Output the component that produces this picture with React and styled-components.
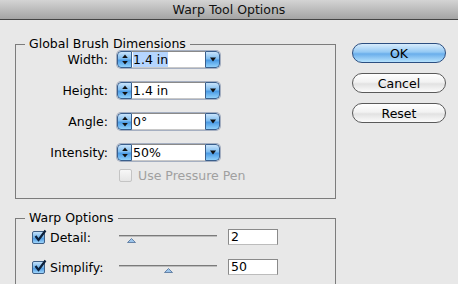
import React from 'react';
import styled, { createGlobalStyle } from 'styled-components';

const Global = createGlobalStyle`
  html, body { margin: 0; padding: 0; background: #e8e8e8; }
  body { font-family: "DejaVu Sans", "Lucida Grande", sans-serif; color: #000; }
`;

const Window = styled.div`
  width: 458px;
  height: 284px;
  overflow: hidden;
  background: #e8e8e8;
`;

const TitleBar = styled.div`
  height: 19px;
  border-bottom: 1px solid #444;
  background: linear-gradient(#d4d4d4, #a4a4a4);
  display: flex;
  align-items: center;
  justify-content: center;
  font-size: 12.5px;
  color: #111;
`;

const Body = styled.div`
  display: flex;
  padding-left: 15px;
`;

const Column = styled.div`
  display: flex;
  flex-direction: column;
  width: 321px;
`;

const Group = styled.fieldset`
  margin: ${p => p.$top}px 0 0 0;
  padding: 0 0 ${p => p.$bottom}px 0;
  border: 1px solid #7c7c7c;
  min-width: 0;
  box-sizing: border-box;
  width: 321px;
`;

const Legend = styled.legend`
  margin-left: 9px;
  padding: 0 4px 0 4px;
  font-size: 12.5px;
  line-height: 14px;
`;

const Grid = styled.div`
  display: grid;
  grid-template-columns: 92px 103px;
  column-gap: 9px;
  row-gap: 14px;
  align-items: center;
`;

const Label = styled.div`
  text-align: right;
  font-size: 12.5px;
  line-height: 17px;
`;

const Combo = styled.div`
  display: flex;
  height: 17px;
  border-radius: 4px;
  overflow: hidden;
  box-shadow: 0 0 0 1px rgba(40, 70, 120, 0.35);
`;

const AquaPart = styled.div`
  width: ${p => p.$w}px;
  background: linear-gradient(#c9e4fb 0%, #7fbdf0 45%, #4a9ae4 55%, #8fd0fb 100%);
  border: 1px solid #3a5f8c;
  border-radius: ${p => (p.$left ? '4px 0 0 4px' : '0 4px 4px 0')};
  box-sizing: border-box;
  display: flex;
  align-items: center;
  justify-content: center;
`;

const Field = styled.div`
  flex: 1;
  background: #fff;
  border-top: 1px solid #8a8a8a;
  border-bottom: 1px solid #c8c8c8;
  display: flex;
  align-items: center;
  padding-left: 1px;
  font-size: 12.5px;
`;

const Selected = styled.span`
  background: ${p => (p.$on ? '#b5d5ff' : 'transparent')};
  line-height: 15px;
`;

const CheckRow = styled.div`
  grid-column: 2;
  display: flex;
  align-items: center;
  gap: 6px;
  margin-top: -7px;
  margin-left: 2px;
  font-size: 12.5px;
  color: ${p => (p.$disabled ? '#a0a0a0' : '#000')};
  white-space: nowrap;
`;

const Box = styled.div`
  flex-shrink: 0;
  width: 13px;
  height: 13px;
  box-sizing: border-box;
  border-radius: 2px;
  border: 1px solid ${p => (p.$checked ? '#3f5f86' : '#c4c4c4')};
  background: ${p =>
    p.$checked
      ? 'linear-gradient(#c4e1fa, #6fb3ec 50%, #4b98e2 55%, #9fd6fb)'
      : 'linear-gradient(#f7f7f7, #e6e6e6)'};
  position: relative;
`;

const WarpList = styled.div`
  display: flex;
  flex-direction: column;
  gap: 14px;
  padding-top: 4px;
`;

const WarpRow = styled.div`
  display: flex;
  align-items: center;
  height: 16px;
  padding-left: 16px;
`;

const WarpLabel = styled.div`
  width: 69px;
  font-size: 12.5px;
  padding-left: 5px;
`;

const Slider = styled.div`
  position: relative;
  width: 98px;
  height: 16px;
  margin-right: 11px;
  &::before {
    content: '';
    position: absolute;
    left: 0;
    right: 0;
    top: 6px;
    height: 1px;
    background: #7a7a7a;
    box-shadow: 0 1px 0 #bdbdbd;
  }
`;

const Thumb = styled.svg`
  position: absolute;
  top: 9px;
`;

const NumBox = styled.div`
  width: 50px;
  height: 16px;
  box-sizing: border-box;
  background: #fff;
  border: 1px solid #8a8a8a;
  border-bottom-color: #bcbcbc;
  font-size: 12.5px;
  line-height: 14px;
  padding-left: 2px;
`;

const Buttons = styled.div`
  display: flex;
  flex-direction: column;
  gap: 10px;
  margin-left: 16px;
  margin-top: 23px;
`;

const Button = styled.div`
  width: 94px;
  height: 20px;
  box-sizing: border-box;
  border-radius: 10px;
  border: 1px solid ${p => (p.$primary ? '#2c4e80' : '#5a5a5a')};
  background: ${p =>
    p.$primary
      ? 'linear-gradient(#d8ecfc 0%, #94c9f4 45%, #6aaeeb 55%, #b6e2fd 100%)'
      : 'linear-gradient(#ffffff 0%, #f2f2f2 45%, #e2e2e2 55%, #fbfbfb 100%)'};
  display: flex;
  align-items: center;
  justify-content: center;
  font-size: 12.5px;
`;

const Arrows = () => (
  <svg width="6" height="11" viewBox="0 0 6 11">
    <path d="M3 0.5 L5.8 4 H0.2 Z" fill="#111" />
    <path d="M3 10.5 L5.8 7 H0.2 Z" fill="#111" />
  </svg>
);

const Down = () => (
  <svg width="6" height="5" viewBox="0 0 6 5">
    <path d="M0 0.5 H6 L3 4.5 Z" fill="#111" />
  </svg>
);

const Tick = () => (
  <svg width="14" height="14" viewBox="0 0 14 14" style={{ position: 'absolute', left: 0, top: -3 }}>
    <path d="M2.5 7 L5.5 11 L12.5 1.5" fill="none" stroke="#0c1f3a" strokeWidth="2.2" />
  </svg>
);

function Spinner({ value, selected }) {
  return (
    <Combo>
      <AquaPart $w={15} $left>
        <Arrows />
      </AquaPart>
      <Field>
        <Selected $on={selected}>{value}</Selected>
      </Field>
      <AquaPart $w={15}>
        <Down />
      </AquaPart>
    </Combo>
  );
}

function WarpSlider({ label, pos, value }) {
  return (
    <WarpRow>
      <Box $checked>
        <Tick />
      </Box>
      <WarpLabel>{label}</WarpLabel>
      <Slider>
        <Thumb width="9" height="5" viewBox="0 0 9 5" style={{ left: pos }}>
          <path d="M4.5 0.5 L8.5 4.5 H0.5 Z" fill="#9cc4ea" stroke="#4f6f97" strokeWidth="0.8" />
        </Thumb>
      </Slider>
      <NumBox>{value}</NumBox>
    </WarpRow>
  );
}

const dims = [
  { label: 'Width:', value: '1.4 in', selected: true },
  { label: 'Height:', value: '1.4 in' },
  { label: 'Angle:', value: '0°' },
  { label: 'Intensity:', value: '50%' },
];

export default function App() {
  return (
    <Window>
      <Global />
      <TitleBar>Warp Tool Options</TitleBar>
      <Body>
        <Column>
          <Group $top={17} $bottom={15}>
            <Legend>Global Brush Dimensions</Legend>
            <Grid>
              {dims.map(d => (
                <React.Fragment key={d.label}>
                  <Label>{d.label}</Label>
                  <Spinner value={d.value} selected={d.selected} />
                </React.Fragment>
              ))}
              <CheckRow $disabled>
                <Box />
                Use Pressure Pen
              </CheckRow>
            </Grid>
          </Group>
          <Group $top={12} $bottom={20}>
            <Legend>Warp Options</Legend>
            <WarpList>
              <WarpSlider label="Detail:" pos={8} value="2" />
              <WarpSlider label="Simplify:" pos={45} value="50" />
            </WarpList>
          </Group>
        </Column>
        <Buttons>
          <Button $primary>OK</Button>
          <Button>Cancel</Button>
          <Button>Reset</Button>
        </Buttons>
      </Body>
    </Window>
  );
}
